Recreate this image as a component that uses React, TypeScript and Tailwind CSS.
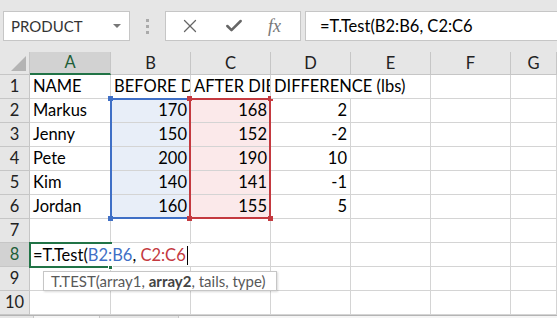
import { X, Check } from "lucide-react";

const cols = ["A", "B", "C", "D", "E", "F", "G"];
const widths = [81, 80, 80, 80, 80, 80, 46];

type Cell = { v: string; right?: boolean; spill?: boolean };
const rows: Cell[][] = [
  [{ v: "NAME" }, { v: "BEFORE DI" }, { v: "AFTER DIE" }, { v: "DIFFERENCE (lbs)", spill: true }],
  [{ v: "Markus" }, { v: "170", right: true }, { v: "168", right: true }, { v: "2", right: true }],
  [{ v: "Jenny" }, { v: "150", right: true }, { v: "152", right: true }, { v: "-2", right: true }],
  [{ v: "Pete" }, { v: "200", right: true }, { v: "190", right: true }, { v: "10", right: true }],
  [{ v: "Kim" }, { v: "140", right: true }, { v: "141", right: true }, { v: "-1", right: true }],
  [{ v: "Jordan" }, { v: "160", right: true }, { v: "155", right: true }, { v: "5", right: true }],
  [],
  [],
  [],
  [],
];

function Handle({ className }: { className: string }) {
  return <div className={`absolute w-[5px] h-[5px] ${className}`} />;
}

export default function App() {
  return (
    <div className="relative w-[557px] h-[318px] overflow-hidden bg-[#e6e6e6] text-[16.5px] text-black" style={{ fontFamily: "Lato, 'Open Sans', sans-serif" }}>
      {/* formula bar */}
      <div className="flex items-center h-[52px] pl-[3px]">
        <div className="flex items-center justify-between w-[127px] h-[30px] bg-white border border-[#c6c6c6] pl-[7px] pr-[8px] text-[15px] text-[#333]">
          <span>PRODUCT</span>
          <span className="w-0 h-0 border-l-[4px] border-r-[4px] border-t-[4px] border-l-transparent border-r-transparent border-t-[#777]" />
        </div>
        <div className="flex flex-col gap-[3px] ml-[16px] mr-[16px]">
          <span className="w-[3px] h-[3px] bg-[#aaa]" />
          <span className="w-[3px] h-[3px] bg-[#aaa]" />
          <span className="w-[3px] h-[3px] bg-[#aaa]" />
        </div>
        <div className="flex items-center w-[136px] h-[30px] bg-white border border-[#c6c6c6]">
          <X className="ml-[13px] w-[22px] h-[22px] text-[#666]" strokeWidth={1.4} />
          <Check className="ml-[23px] w-[20px] h-[20px] text-[#666]" strokeWidth={3} />
          <span className="ml-[24px] italic text-[18px] text-[#777]" style={{ fontFamily: "'Liberation Serif', serif" }}>fx</span>
        </div>
        <div className="flex items-center flex-1 h-[30px] ml-[4px] bg-white border border-[#c6c6c6] border-r-0 pl-[14px]">
          =T.Test(B2:B6, C2:C6
        </div>
      </div>

      {/* grid */}
      <div className="relative">
        <div className="flex h-[23px]">
          <div className="relative w-[30px] border-r border-b border-[#c6c6c6] bg-[#e6e6e6]">
            <div className="absolute right-[3px] bottom-[3px] w-0 h-0" style={{ borderBottom: "15px solid #b4b4b4", borderLeft: "15px solid transparent" }} />
          </div>
          {cols.map((c, i) => (
            <div
              key={c}
              style={{ width: widths[i] }}
              className={`flex items-center justify-center border-r border-[#c6c6c6] ${i === 0 ? "bg-[#d2d2d2] border-b-2 border-b-[#217346] text-[#1d5e38]" : "bg-[#e6e6e6] border-b text-[#222]"}`}
            >
              {c}
            </div>
          ))}
        </div>
        {rows.map((r, ri) => (
          <div key={ri} className="flex h-[24px]">
            <div className={`flex items-center justify-center w-[30px] border-r border-b border-[#c6c6c6] ${ri === 7 ? "bg-[#d2d2d2] text-[#1d5e38]" : "bg-[#e6e6e6] text-[#222]"}`}>
              {ri + 1}
            </div>
            {cols.map((c, ci) => {
              const cell = r[ci];
              const blue = ri >= 1 && ri <= 5 && ci === 1;
              const red = ri >= 1 && ri <= 5 && ci === 2;
              return (
                <div
                  key={c}
                  style={{ width: widths[ci] }}
                  className={`flex items-center whitespace-nowrap border-b border-[#d4d4d4] px-[3px] ${cell?.spill ? "relative z-10 overflow-visible" : "border-r overflow-hidden"} ${cell?.right ? "justify-end" : "justify-start"} ${blue ? "bg-[#e8eef8]" : red ? "bg-[#fbe9ea]" : "bg-white"}`}
                >
                  {cell?.v}
                </div>
              );
            })}
          </div>
        ))}

        {/* blue range B2:B6 */}
        <div className="absolute left-[110px] top-[46px] w-[81px] h-[121px] border-2 border-[#3f6fc6]" />
        <Handle className="left-[108px] top-[44px] bg-[#3f6fc6]" />
        <Handle className="left-[108px] top-[164px] bg-[#3f6fc6]" />
        {/* red range C2:C6 */}
        <div className="absolute left-[189px] top-[46px] w-[82px] h-[121px] border-2 border-[#c4393f]" />
        <Handle className="left-[187px] top-[44px] bg-[#c4393f]" />
        <Handle className="left-[268px] top-[44px] bg-[#c4393f]" />
        <Handle className="left-[187px] top-[164px] bg-[#c4393f]" />
        <Handle className="left-[268px] top-[164px] bg-[#c4393f]" />

        {/* active cell A8 in edit mode */}
        <div className="absolute left-[29px] top-[190px] w-[83px] h-[26px] border-2 border-[#217346]" />
        <Handle className="left-[108px] top-[213px] bg-[#217346] border border-white" />
        <div className="absolute left-[31px] top-[192px] w-[160px] h-[22px] bg-white flex items-center pl-[2px] whitespace-nowrap">
          <span>=T.Test(</span>
          <span className="text-[#3f6fc6]">B2:B6</span>
          <span>,&nbsp;</span>
          <span className="text-[#c4393f]">C2:C6</span>
          <span className="ml-[1px] w-px h-[19px] bg-black" />
        </div>

        {/* tooltip */}
        <div className="absolute left-[43px] top-[219px] w-[234px] h-[20px] bg-white border border-[#c6c6c6] shadow-[1px_1px_2px_rgba(0,0,0,0.15)] flex items-center pl-[7px] text-[15px] text-[#595959] whitespace-nowrap">
          T.TEST(array1,&nbsp;<b className="text-[#444]">array2</b>, tails, type)
        </div>
      </div>

      {/* bottom strip */}
      <div className="relative h-[4px] border-t border-[#b4b4b4] bg-[#e6e6e6]">
        <div className="absolute left-[33px] top-0 w-[67px] h-[4px] bg-[#f5f5f5] border-x border-[#c6c6c6]" />
        <div className="absolute left-[178px] top-0 w-[400px] h-[4px] bg-[#f5f5f5] border-l border-[#c6c6c6]" />
      </div>
    </div>
  );
}
